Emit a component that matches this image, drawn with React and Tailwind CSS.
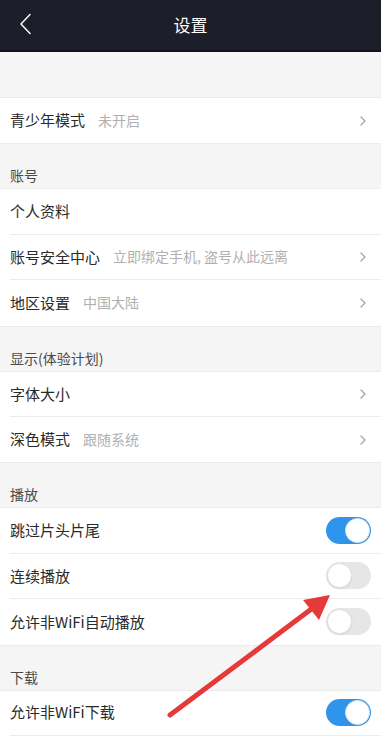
import React from "react";

const font = { fontFamily: '"Noto Sans CJK SC", "Noto Sans", sans-serif' };

function Chevron() {
  return (
    <svg width="8" height="12" viewBox="0 0 8 12" className="shrink-0">
      <path d="M2 2 L6 6 L2 10" fill="none" stroke="#a8a8a8" strokeWidth="1.4" strokeLinecap="round" strokeLinejoin="round" />
    </svg>
  );
}

function Toggle({ on }) {
  return on ? (
    <div className="w-[45px] h-[27px] rounded-full bg-[#2f95ec] flex items-center justify-end pr-[1px]">
      <div className="w-[25px] h-[25px] rounded-full bg-white border border-[#d8e6f2]" />
    </div>
  ) : (
    <div className="w-[45px] h-[27px] rounded-full bg-[#e6e6e6] flex items-center pl-[1px]">
      <div className="w-[25px] h-[25px] rounded-full bg-white border border-[#e0e0e0] shadow-[0_1px_2px_rgba(0,0,0,0.08)]" />
    </div>
  );
}

function Row({ title, sub, right, last }) {
  return (
    <div className="bg-white pl-[10px]">
      <div className={`h-[45.4px] flex items-center pr-[10px] ${last ? "" : "border-b border-[#ececec]"}`}>
        <span className="text-[15px] text-[#2a2a2a]">{title}</span>
        {sub && <span className="text-[14px] text-[#b0b0b0] ml-[13px]">{sub}</span>}
        <div className="flex-1" />
        {right === "chev" && <div className="pr-[4px]"><Chevron /></div>}
        {right === "on" && <Toggle on />}
        {right === "off" && <Toggle />}
      </div>
    </div>
  );
}

function Header({ text }) {
  return (
    <div className="h-[46px] flex items-end pb-[2px] pl-[10px] border-y border-[#ececec]">
      <span className="text-[14px] text-[#4a4a4a]">{text}</span>
    </div>
  );
}

export default function App() {
  return (
    <div className="relative w-[381px] h-[745px] overflow-hidden bg-[#f5f5f5]" style={font}>
      <div className="h-[52px] bg-[#1c1e29] flex items-center justify-center relative border-b-2 border-[#12131a]">
        <svg width="14" height="22" viewBox="0 0 14 22" className="absolute left-[19px] top-[13px]">
          <path d="M11 1.5 L2 11 L11 20.5" fill="none" stroke="#f2f2f2" strokeWidth="1.6" strokeLinecap="round" strokeLinejoin="round" />
        </svg>
        <span className="text-[17px] text-white">设置</span>
      </div>
      <div className="h-[46px] border-b border-[#ececec]" />
      <Row title="青少年模式" sub="未开启" right="chev" last />
      <Header text="账号" />
      <Row title="个人资料" />
      <Row title="账号安全中心" sub="立即绑定手机, 盗号从此远离" right="chev" />
      <Row title="地区设置" sub="中国大陆" right="chev" last />
      <Header text="显示(体验计划)" />
      <Row title="字体大小" right="chev" />
      <Row title="深色模式" sub="跟随系统" right="chev" last />
      <Header text="播放" />
      <Row title="跳过片头片尾" right="on" />
      <Row title="连续播放" right="off" />
      <Row title="允许非WiFi自动播放" right="off" last />
      <Header text="下载" />
      <Row title="允许非WiFi下载" right="on" />
      <Row title="" />
      <svg className="absolute left-0 top-0 pointer-events-none" width="381" height="745" viewBox="0 0 381 745">
        <line x1="170" y1="715" x2="314" y2="607" stroke="#e53a3a" strokeWidth="5" strokeLinecap="round" />
        <polygon points="330,595 303,600 319,620" fill="#e53a3a" />
      </svg>
    </div>
  );
}
